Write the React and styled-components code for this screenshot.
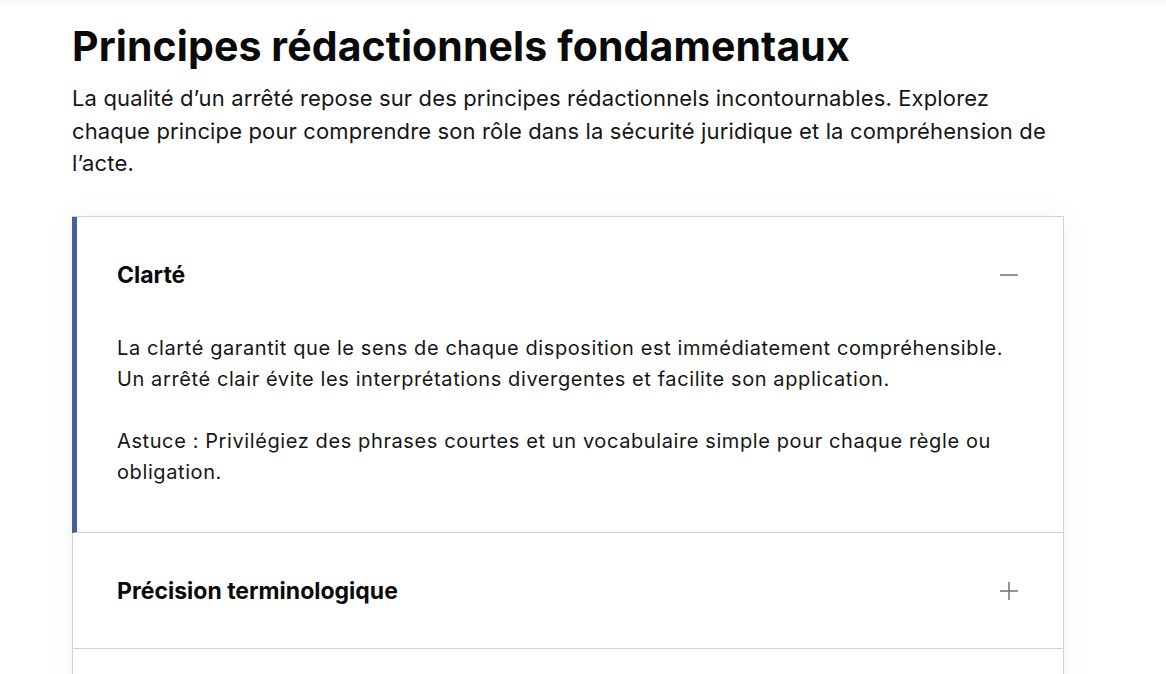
import React, { useState } from 'react'
import styled, { createGlobalStyle } from 'styled-components'

const GlobalStyle = createGlobalStyle`
    html, body {
        margin: 0;
        padding: 0;
        background: #ffffff;
    }
    body {
        font-family: Inter, "Noto Sans", sans-serif;
        color: #161616;
    }
`

const principles = [
    {
        title: 'Clarté',
        paragraphs: [
            ['La clarté garantit que le sens de chaque disposition est immédiatement compréhensible.', 'Un arrêté clair évite les interprétations divergentes et facilite son application.'],
            ['Astuce : Privilégiez des phrases courtes et un vocabulaire simple pour chaque règle ou', 'obligation.'],
        ],
    },
    {
        title: 'Précision terminologique',
        paragraphs: [
            ['Chaque terme doit être employé dans un sens unique et constant tout au long de l’acte.'],
        ],
    },
    {
        title: 'Cohérence',
        paragraphs: [
            ['Les dispositions doivent s’articuler sans contradiction avec les textes supérieurs.'],
        ],
    },
]

const App = () => {
    const [openIndex, setOpenIndex] = useState(0)
    return (
        <>
            <GlobalStyle />
            <Page>
                <Section>
                    <Title>Principes rédactionnels fondamentaux</Title>
                    <Intro>
                        La qualité d’un arrêté repose sur des principes rédactionnels incontournables. Explorez<br />
                        chaque principe pour comprendre son rôle dans la sécurité juridique et la compréhension de<br />
                        l’acte.
                    </Intro>
                    <Accordion>
                        {principles.map((item, i) => {
                            const open = openIndex === i
                            return (
                                <Item key={item.title} $open={open}>
                                    <Header $open={open} onClick={() => setOpenIndex(open ? -1 : i)}>
                                        <ItemTitle>{item.title}</ItemTitle>
                                        <Toggle viewBox="0 0 20 20" aria-hidden="true">
                                            <line x1="1" y1="10" x2="19" y2="10" />
                                            {!open && <line x1="10" y1="1" x2="10" y2="19" />}
                                        </Toggle>
                                    </Header>
                                    {open && (
                                        <Panel>
                                            {item.paragraphs.map((lines, j) => (
                                                <Text key={j}>
                                                    {lines.map((line, k) => (
                                                        <React.Fragment key={k}>
                                                            {k > 0 && <br />}
                                                            {line}
                                                        </React.Fragment>
                                                    ))}
                                                </Text>
                                            ))}
                                        </Panel>
                                    )}
                                </Item>
                            )
                        })}
                    </Accordion>
                </Section>
            </Page>
        </>
    )
}

export default App

const Page = styled.div`
    min-height: 674px;
    box-shadow: inset 0 10px 10px -10px rgba(0, 0, 0, 0.08);
`

const Section = styled.main`
    padding: 20px 72px 0 72px;
`

const Title = styled.h1`
    margin: 0;
    font-size: 41px;
    line-height: 52px;
    font-weight: 700;
    letter-spacing: 0.1px;
    color: #0a0a0a;
`

const Intro = styled.p`
    margin: 10px 0 36px 0;
    font-size: 22px;
    line-height: 32.5px;
    letter-spacing: 0.14px;
    white-space: nowrap;
    color: #161616;
`

const Accordion = styled.div`
    width: 992px;
    box-sizing: border-box;
    border: 1px solid #d0d0d0;
    border-bottom: none;
    box-shadow: 0 0 26px rgba(0, 0, 0, 0.055);
`

const Item = styled.div`
    border-bottom: 1px solid #d0d0d0;
    border-left: 5px solid ${p => (p.$open ? '#445f9b' : 'transparent')};
    margin-left: -1px;
    &:not(:first-child) {
        border-left: 1px solid #d0d0d0;
    }
`

const Header = styled.button`
    display: flex;
    width: 100%;
    align-items: center;
    justify-content: space-between;
    padding: 41px 44px 40px ${p => (p.$open ? '40px' : '44px')};
    background: none;
    border: none;
    cursor: pointer;
    text-align: left;
    font-family: inherit;
    color: inherit;
`

const ItemTitle = styled.span`
    font-size: 23px;
    line-height: 34px;
    font-weight: 700;
    color: #0a0a0a;
`

const Toggle = styled.svg`
    width: 20px;
    height: 20px;
    stroke: #7a7a7a;
    stroke-width: 1.6;
    flex-shrink: 0;
`

const Panel = styled.div`
    padding: 1px 44px 44px 40px;
`

const Text = styled.p`
    margin: 0 0 31px 0;
    font-size: 20px;
    line-height: 31px;
    letter-spacing: 0.6px;
    white-space: nowrap;
    color: #161616;
    &:last-child {
        margin-bottom: 0;
    }
`
